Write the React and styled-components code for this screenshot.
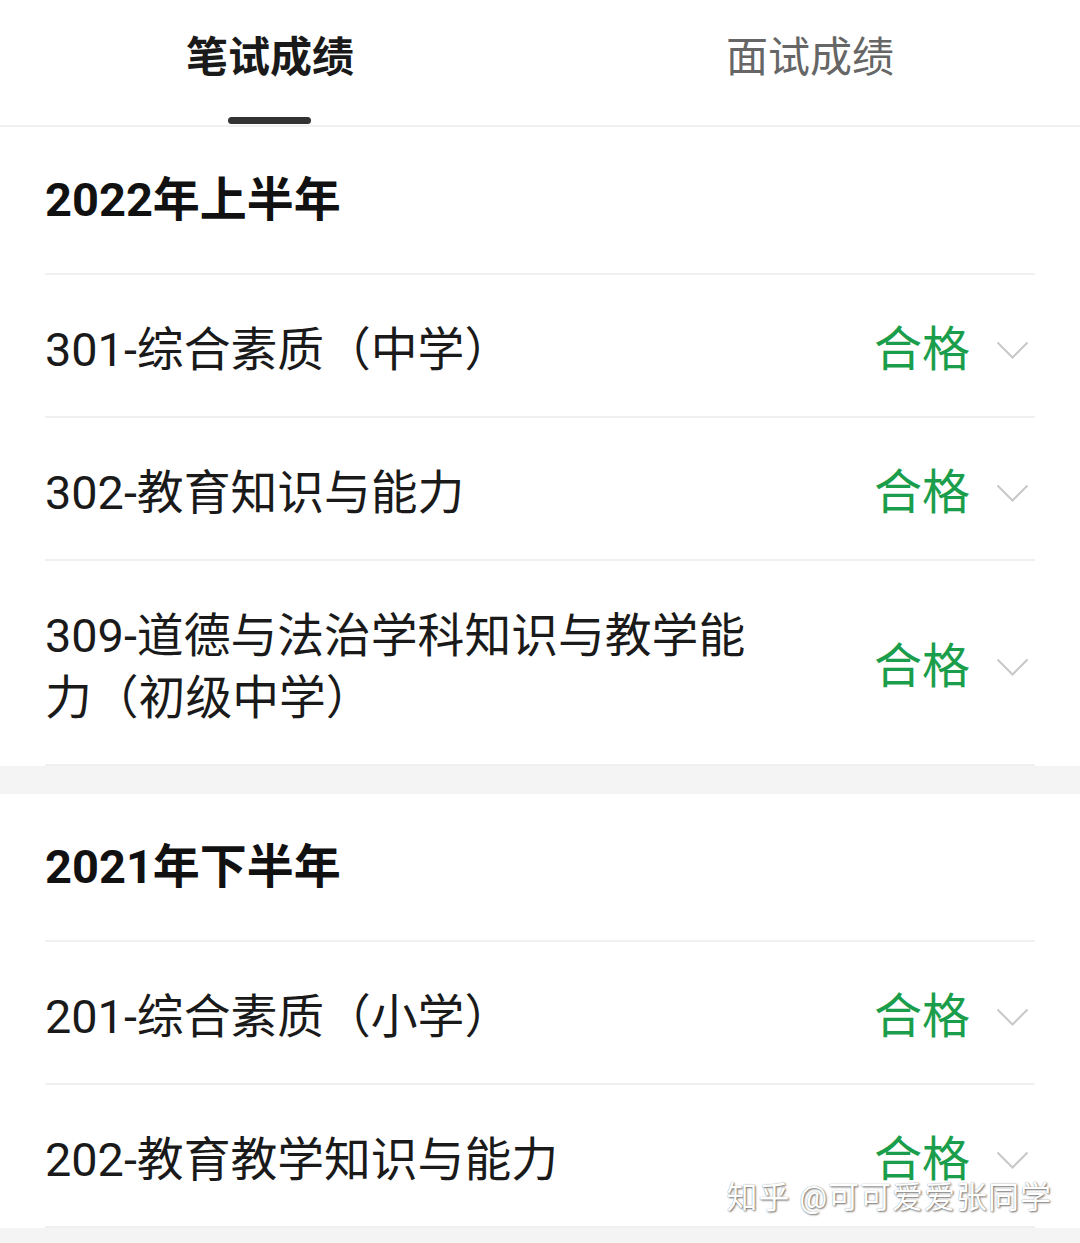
import React, { useState } from "react";
import styled, { createGlobalStyle } from "styled-components";

const GlobalStyle = createGlobalStyle`
  body {
    margin: 0;
    background: #ffffff;
    font-family: Roboto, "Noto Sans CJK SC", "Noto Sans", sans-serif;
    color: #1a1a1a;
  }
`;

const Page = styled.div`
  position: relative;
  width: 1080px;
  height: 1243px;
  overflow: hidden;
  background: #ffffff;
`;

const TabBar = styled.div`
  display: flex;
  height: 125px;
  border-bottom: 2px solid #f0f0f0;
`;

const Tab = styled.div`
  flex: 1;
  position: relative;
  display: flex;
  justify-content: center;
  padding-top: 33px;
  box-sizing: border-box;
  font-size: 42px;
  line-height: 50px;
  font-weight: ${(p) => (p.active ? 700 : 400)};
  color: ${(p) => (p.active ? "#1a1a1a" : "#666666")};
  cursor: pointer;
`;

const Indicator = styled.span`
  position: absolute;
  bottom: 1px;
  left: 50%;
  width: 83px;
  height: 7px;
  margin-left: -42px;
  border-radius: 4px;
  background: #333333;
`;

const Section = styled.section`
  background: #ffffff;
  padding: 0 45px;
`;

const Band = styled.div`
  height: 28px;
  background: #f4f4f4;
`;

const Heading = styled.h2`
  margin: 0;
  padding: 44px 0 45px;
  font-size: 47px;
  line-height: 57px;
  font-weight: 700;
  color: #111111;
  border-bottom: 2px solid #f0f0f0;
`;

const Row = styled.div`
  display: flex;
  align-items: center;
  padding: 44px 0 35px;
  border-bottom: 2px solid #f0f0f0;
`;

const Subject = styled.div`
  flex: 1;
  max-width: 725px;
  font-size: 46.8px;
  line-height: 62px;
  color: #1a1a1a;
`;

const Result = styled.div`
  margin-left: auto;
  display: flex;
  align-items: center;
  gap: 26px;
  margin-right: 6px;
`;

const Status = styled.span`
  font-size: 48px;
  line-height: 62px;
  color: #1b9e4b;
`;

const Chevron = () => (
  <svg width="33" height="19" viewBox="0 0 33 19" fill="none">
    <path d="M1.5 1.5 L16.5 16.5 L31.5 1.5" stroke="#c8c8c8" strokeWidth="2" />
  </svg>
);

const Watermark = styled.div`
  position: absolute;
  right: 28px;
  bottom: 26px;
  font-size: 31px;
  letter-spacing: 1px;
  color: #ffffff;
  text-shadow: 1px 1px 2px rgba(0, 0, 0, 0.55), 0 0 1px rgba(0, 0, 0, 0.4);
`;

const groups = [
  {
    title: "2022年上半年",
    items: [
      "301-综合素质（中学）",
      "302-教育知识与能力",
      "309-道德与法治学科知识与教学能力（初级中学）",
    ],
  },
  {
    title: "2021年下半年",
    items: ["201-综合素质（小学）", "202-教育教学知识与能力"],
  },
];

export default function App() {
  const [tab, setTab] = useState(0);
  return (
    <Page>
      <GlobalStyle />
      <TabBar>
        {["笔试成绩", "面试成绩"].map((t, i) => (
          <Tab key={t} active={tab === i} onClick={() => setTab(i)}>
            {t}
            {tab === i && <Indicator />}
          </Tab>
        ))}
      </TabBar>
      {groups.map((g, gi) => (
        <React.Fragment key={g.title}>
          {gi > 0 && <Band />}
          <Section>
            <Heading>{g.title}</Heading>
            {g.items.map((item) => (
              <Row key={item}>
                <Subject>{item}</Subject>
                <Result>
                  <Status>合格</Status>
                  <Chevron />
                </Result>
              </Row>
            ))}
          </Section>
        </React.Fragment>
      ))}
      <Band />
      <Watermark>知乎 @可可爱爱张同学</Watermark>
    </Page>
  );
}
